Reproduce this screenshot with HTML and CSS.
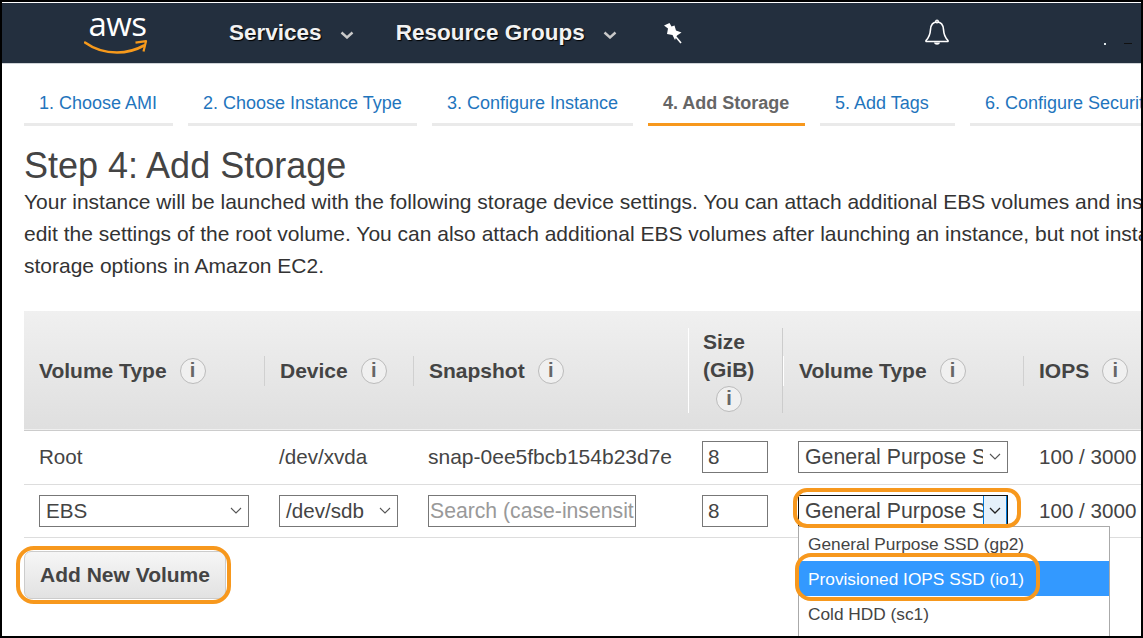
FILE: index.html
```html
<!DOCTYPE html>
<html>
<head>
    <title>Step 4: Add Storage</title>
    <link rel="stylesheet" href="styles.css">
</head>

<body>
    <div class="frame">
        <nav class="topbar">
            <a class="logo">
                <span class="logo-text">aws</span>
                <svg class="logo-smile" width="64" height="16" viewBox="0 0 64 16">
                    <path d="M1 3.5C10 10 21 13.5 33 13.5C43 13.5 52 11 60 6.5" fill="none" stroke="#f79a1c" stroke-width="2.6" stroke-linecap="round"/>
                    <path d="M51.5 3.6L62 2.2L59.5 12.5" fill="none" stroke="#f79a1c" stroke-width="2.2" stroke-linejoin="round"/>
                </svg>
            </a>
            <a class="nav-link services">Services <svg class="nav-caret" width="14" height="8" viewBox="0 0 14 8"><path d="M1.5 1.5L7 6.5L12.5 1.5" fill="none" stroke="#c9c9c9" stroke-width="2.4"/></svg></a>
            <a class="nav-link groups">Resource Groups <svg class="nav-caret" width="14" height="8" viewBox="0 0 14 8"><path d="M1.5 1.5L7 6.5L12.5 1.5" fill="none" stroke="#c9c9c9" stroke-width="2.4"/></svg></a>
            <svg class="pin" width="20" height="22" viewBox="0 0 20 22">
                <path d="M6.5 1L1 3.5L5 6.5L4 12L9.5 13L12 18L14 13.5L18.5 10.5L13 8.5L11.5 3.5L8.5 4.5Z" fill="#fff"/>
                <path d="M13 15L18 21" stroke="#fff" stroke-width="1.6"/>
            </svg>
            <svg class="bell" width="26" height="28" viewBox="0 0 26 28">
                <path d="M13 3C8.5 3 6.8 6.5 6.5 10.5C6.2 15.5 5 18.5 2 21.5L2 22.5L24 22.5L24 21.5C21 18.5 19.8 15.5 19.5 10.5C19.2 6.5 17.5 3 13 3Z" fill="none" stroke="#fff" stroke-width="1.6" stroke-linejoin="round"/>
                <circle cx="13" cy="2.5" r="1.4" fill="none" stroke="#fff" stroke-width="1.2"/>
                <path d="M10 23.5C10.5 26.5 15.5 26.5 16 23.5Z" fill="#fff"/>
            </svg>
            <span class="nav-dot"></span>
            <span class="nav-dash"></span>
        </nav>

        <ul class="tabs">
            <li class="tab tab-1">1. Choose AMI</li>
            <li class="tab tab-2">2. Choose Instance Type</li>
            <li class="tab tab-3">3. Configure Instance</li>
            <li class="tab tab-4 active">4. Add Storage</li>
            <li class="tab tab-5">5. Add Tags</li>
            <li class="tab tab-6">6. Configure Security Group</li>
        </ul>

        <div class="content">
            <h1>Step 4: Add Storage</h1>
            <p class="intro">Your instance will be launched with the following storage device settings. You can attach additional EBS volumes and instance store volumes to your instance, or<br>edit the settings of the root volume. You can also attach additional EBS volumes after launching an instance, but not instance store volumes. Learn more about<br>storage options in Amazon EC2.</p>

            <table class="volumes">
                <colgroup>
                    <col class="col-type">
                    <col class="col-device">
                    <col class="col-snapshot">
                    <col class="col-size">
                    <col class="col-voltype">
                    <col class="col-iops">
                </colgroup>
                <thead>
                    <tr>
                        <th><span class="th-in">Volume Type <i class="info">i</i></span></th>
                        <th><span class="th-in sep">Device <i class="info">i</i></span></th>
                        <th><span class="th-in sep">Snapshot <i class="info">i</i></span></th>
                        <th><span class="th-tall">Size<br>(GiB)<br><i class="info">i</i></span></th>
                        <th><span class="th-in th-voltype">Volume Type <i class="info">i</i></span></th>
                        <th><span class="th-in sep th-iops">IOPS <i class="info">i</i></span></th>
                    </tr>
                </thead>
                <tbody>
                    <tr>
                        <td>Root</td>
                        <td>/dev/xvda</td>
                        <td class="snap">snap-0ee5fbcb154b23d7e</td>
                        <td><input class="field size-input" type="text" value="8"></td>
                        <td>
                            <div class="select voltype-select">
                                <span class="select-text">General Purpose S</span>
                                <span class="select-arrow"><svg width="12" height="7" viewBox="0 0 12 7"><path d="M1 1L6 6L11 1" fill="none" stroke="#555" stroke-width="1.1"/></svg></span>
                            </div>
                        </td>
                        <td>100 / 3000</td>
                    </tr>
                    <tr>
                        <td>
                            <div class="select ebs-select">
                                <span class="select-text">EBS</span>
                                <span class="select-arrow"><svg width="12" height="7" viewBox="0 0 12 7"><path d="M1 1L6 6L11 1" fill="none" stroke="#555" stroke-width="1.1"/></svg></span>
                            </div>
                        </td>
                        <td>
                            <div class="select device-select">
                                <span class="select-text">/dev/sdb</span>
                                <span class="select-arrow"><svg width="12" height="7" viewBox="0 0 12 7"><path d="M1 1L6 6L11 1" fill="none" stroke="#555" stroke-width="1.1"/></svg></span>
                            </div>
                        </td>
                        <td><input class="field search-input" type="text" placeholder="Search (case-insensitive)"></td>
                        <td><input class="field size-input" type="text" value="8"></td>
                        <td>
                            <div class="select voltype-select open">
                                <span class="select-text">General Purpose S</span>
                                <span class="select-arrow"><svg width="12" height="7" viewBox="0 0 12 7"><path d="M1 1L6 6L11 1" fill="none" stroke="#222" stroke-width="1.3"/></svg></span>
                            </div>
                        </td>
                        <td>100 / 3000</td>
                    </tr>
                </tbody>
            </table>

            <button class="add-btn">Add New Volume</button>
        </div>

        <ul class="dropdown">
            <li>General Purpose SSD (gp2)</li>
            <li class="selected">Provisioned IOPS SSD (io1)</li>
            <li>Cold HDD (sc1)</li>
        </ul>

        <div class="ring ring-btn"></div>
        <div class="ring ring-select"></div>
        <div class="ring ring-option"></div>
    </div>
</body>

</html>
```

FILE: styles.css
```css
* {
    box-sizing: border-box;
}
body {
    margin: 0;
    font-family: "Liberation Sans", Arial, sans-serif;
    color: #444;
    background-color: #fff;
}
.frame {
    position: relative;
    width: 1143px;
    height: 638px;
    padding-top: 1px;
    border: 2px solid #000;
    overflow: hidden;
}

/* top bar */
.topbar {
    display: flex;
    align-items: center;
    height: 61px;
    background-color: #232f3e;
    color: #f2f2f2;
    border-bottom: 1px solid #cfd3d7;
}
.logo {
    position: relative;
    width: 64px;
    height: 46px;
    margin-left: 82px;
    margin-top: -12px;
}
.logo-text {
    display: block;
    padding-left: 3px;
    font-family: "Open Sans", sans-serif;
    font-size: 33px;
    line-height: 40px;
    color: #fff;
    text-align: center;
    letter-spacing: -0.5px;
}
.logo-smile {
    position: absolute;
    left: 0;
    top: 35px;
}
.nav-link {
    display: flex;
    align-items: center;
    font-size: 22.5px;
    font-weight: bold;
    text-shadow: 1px 1px 1px #000;
    white-space: pre;
}
.services {
    margin-left: 81px;
}
.groups {
    margin-left: 42px;
}
.nav-caret {
    margin-left: 12px;
    margin-top: 3px;
}
.pin {
    margin-left: 46px;
}
.bell {
    margin-left: 241px;
}
.nav-dot {
    width: 2px;
    height: 2px;
    margin: 21px 0 0 154px;
    background-color: #dfe8ea;
}
.nav-dash {
    width: 8px;
    height: 1px;
    margin: 21px 0 0 18px;
    background-color: #111;
}

/* wizard tabs */
.tabs {
    display: flex;
    gap: 15px;
    margin: 0;
    padding: 24px 0 0 22px;
    list-style: none;
    white-space: nowrap;
}
.tab {
    flex: none;
    height: 38px;
    padding: 3px 15px 0;
    font-size: 18px;
    line-height: 24px;
    color: #1f75bd;
    border-bottom: 3px solid #eaeaea;
}
.tab.active {
    font-weight: bold;
    color: #666;
    border-bottom-color: #f7981d;
}
.tab-1 { width: 149px; }
.tab-2 { width: 229px; }
.tab-3 { width: 201px; }
.tab-4 { width: 157px; }
.tab-5 { width: 135px; }
.tab-6 { width: 240px; }

/* page text */
.content {
    padding-left: 22px;
}
h1 {
    margin: 20px 0 0;
    font-size: 36px;
    font-weight: normal;
    line-height: 40px;
    color: #444;
}
.intro {
    width: 1400px;
    margin: 0 0 29px;
    font-size: 21px;
    line-height: 32px;
    color: #333;
    white-space: nowrap;
}

/* volumes table */
.volumes {
    width: 1117px;
    table-layout: fixed;
    border-collapse: collapse;
    font-size: 20.6px;
}
.col-type { width: 240px; }
.col-device { width: 149px; }
.col-snapshot { width: 275px; }
.col-size { width: 95px; }
.col-voltype { width: 241px; }
.col-iops { width: 117px; }
.volumes thead tr {
    height: 119px;
    background: linear-gradient(#f0f0f0, #dfdfdf);
    border-bottom: 1px solid #ccc;
}
.volumes th {
    padding: 0;
    text-align: left;
    font-size: 21px;
    font-weight: bold;
    color: #444;
}
.th-in {
    display: flex;
    align-items: center;
    height: 30px;
    margin-top: 2px;
    padding-left: 15px;
    white-space: nowrap;
}
.th-in.sep {
    border-left: 1px solid #d0d0d0;
}
.th-voltype {
    border-left: 1px solid #fff;
}
.th-iops {
    margin-left: -1px;
}
.th-tall {
    display: block;
    height: 85px;
    padding-left: 14px;
    line-height: 28px;
    border-left: 1px solid #fff;
    border-right: 1px solid #ccc;
}
.th-tall .info {
    margin: 2px 0 0 13px;
    vertical-align: top;
}
.info {
    display: inline-block;
    flex: none;
    width: 26px;
    height: 26px;
    margin-left: 13px;
    border: 1.5px solid #bbb;
    border-radius: 50%;
    background-color: #f0f0f0;
    font-family: "Liberation Sans", sans-serif;
    font-style: normal;
    font-weight: bold;
    font-size: 20px;
    line-height: 23px;
    text-align: center;
    color: #666;
}
.volumes td {
    height: 53px;
    padding: 0 0 0 15px;
    color: #444;
    white-space: nowrap;
    border-bottom: 1px solid #ddd;
}
.volumes tbody tr:first-child td {
    height: 54px;
    padding-bottom: 1px;
}
.volumes td:nth-child(4),
.volumes tbody tr:first-child td:nth-child(4) {
    padding-left: 14px;
}
.volumes .snap {
    font-size: 21px;
}

/* form controls */
.field {
    display: block;
    height: 32px;
    padding: 0 5px;
    border: 1px solid #777;
    border-radius: 0;
    font-family: inherit;
    font-size: 20.6px;
    color: #444;
    background-color: #fff;
}
.field::placeholder {
    color: #999;
    opacity: 1;
}
.size-input {
    width: 66px;
}
.search-input {
    width: 208px;
    padding: 0 1px;
    font-size: 21.2px;
}
.select {
    display: flex;
    align-items: center;
    height: 32px;
    border: 1px solid #777;
    background-color: #fff;
    overflow: hidden;
}
.select-text {
    flex: 1;
    min-width: 0;
    padding-left: 6px;
    overflow: hidden;
    white-space: nowrap;
}
.select-arrow {
    display: flex;
    flex: none;
    align-items: center;
    justify-content: center;
    width: 24px;
    height: 100%;
}
.ebs-select {
    width: 210px;
}
.device-select {
    width: 119px;
}
.voltype-select {
    width: 210px;
    font-size: 21.3px;
}
.voltype-select .select-text {
    padding-top: 1px;
}
.select.open {
    border-color: #111;
    border-bottom-color: #777;
}
.select.open .select-arrow {
    background-color: #e5f1fb;
    border-left: 1px solid #0078d7;
    border-right: 1px solid #0078d7;
}

.add-btn {
    display: block;
    width: 202px;
    height: 48px;
    margin-top: 13px;
    border: 1px solid #ccc;
    border-radius: 7px;
    background: linear-gradient(#f6f6f6, #e2e2e2);
    font-family: inherit;
    font-size: 21px;
    font-weight: bold;
    color: #444;
}

/* open select list, lies over the table */
.dropdown {
    position: absolute;
    left: 796px;
    top: 524px;
    width: 312px;
    height: 120px;
    margin: 0;
    padding: 0;
    list-style: none;
    border: 1px solid #aaa;
    background-color: #fff;
    font-size: 17.3px;
    color: #444;
}
.dropdown li {
    height: 35px;
    padding: 2px 0 0 9px;
    line-height: 33px;
    white-space: nowrap;
}
.dropdown li:first-child {
    height: 34px;
    padding-top: 1px;
}
.dropdown .selected {
    background-color: #3399ff;
    color: #fff;
}

/* orange annotation rings */
.ring {
    position: absolute;
    border: 4px solid #f7981d;
    pointer-events: none;
}
.ring-btn {
    left: 14px;
    top: 544px;
    width: 215px;
    height: 58px;
    border-radius: 18px;
}
.ring-select {
    left: 791px;
    top: 486px;
    width: 228px;
    height: 40px;
    border-radius: 14px;
}
.ring-option {
    left: 793px;
    top: 551px;
    width: 245px;
    height: 48px;
    border-radius: 16px;
}
```
